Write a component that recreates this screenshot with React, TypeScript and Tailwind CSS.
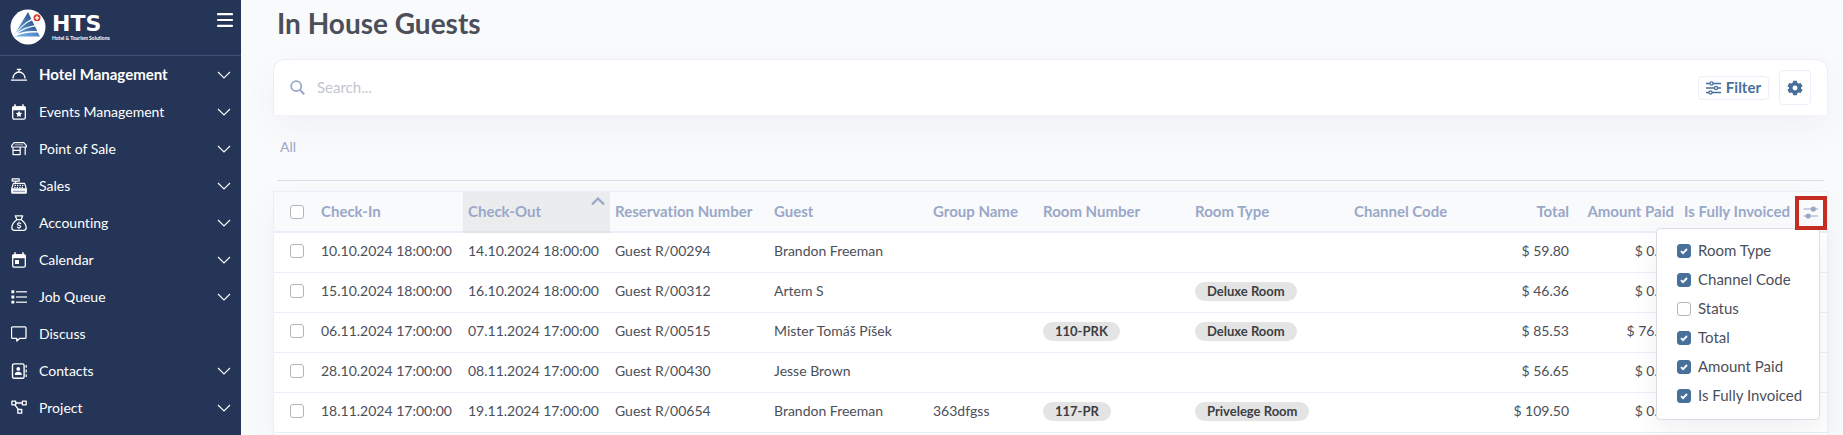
import type { ReactNode } from "react";

const line = {
  fill: "none",
  stroke: "currentColor",
  strokeWidth: 1.3,
  strokeLinecap: "round" as const,
  strokeLinejoin: "round" as const,
};

function Icon({ children }: { children: ReactNode }) {
  return (
    <svg viewBox="0 0 16 16" className="size-4 shrink-0" aria-hidden="true">
      {children}
    </svg>
  );
}

const BellIcon = () => (
  <Icon>
    <path {...line} strokeLinecap="butt" d="M0 13.2h16M2 11.4a6 6.4 0 0 1 12 0M5.8 2.3h4.4M8 2.3V5" />
  </Icon>
);
const EventIcon = () => (
  <Icon>
    <rect {...line} x="1.7" y="2.8" width="12.6" height="12.4" rx="1.6" />
    <path fill="currentColor" d="M1.2 3.6C1.2 2.7 2 2.2 2.8 2.2h10.4c.9 0 1.6.6 1.6 1.4v2.6H1.2ZM3.3.2h1.5v3H3.3ZM11.2.2h1.5v3h-1.5ZM8 6.8l1 2 2.2.3-1.6 1.6.4 2.2L8 11.9l-2 1 .4-2.2-1.6-1.6L7 8.8Z" />
  </Icon>
);
const ShopIcon = () => (
  <Icon>
    <path {...line} strokeWidth={1.2} d="M3.2 1.600h9.600L15.400 4.600V6H.6V4.600ZM2 6v7.600h7.200V6M2 9.300h7.200M14.200 6v7.600" />
    <path {...line} strokeWidth={1} d="M4.200 3.800h7.600" opacity=".6" />
  </Icon>
);
const RegisterIcon = () => (
  <Icon>
    <path {...line} strokeWidth={1.2} d="M1.200.8h7v2.400h-7ZM4.700 3.200v2.200M2.400 5.400h11.200l1.700 5.400H.7Z" />
    <path fill="currentColor" d="M.1 11h15.800v3.600c0 .8-.4 1.200-1.200 1.200H1.300c-.8 0-1.200-.4-1.200-1.200Z" />
    <path stroke="#9aa5c4" strokeWidth="1.400" d="M2 13.400h12" />
    <path stroke="currentColor" strokeWidth="1.200" strokeDasharray="1.300 1.200" d="M3.600 7.400h9M3.200 9.300h10" />
  </Icon>
);
const MoneyBagIcon = () => (
  <Icon>
    <path {...line} d="M5.800 4.600 4.300.8h7.400l-1.500 3.800ZM5.800 4.800C3 6.800.8 9.900.8 12.800c0 1.700 1 2.500 2.600 2.500h9.200c1.600 0 2.600-.8 2.600-2.500 0-2.900-2.200-6-5-8" />
    <path {...line} strokeWidth={1.1} d="M9.700 8.600C9.200 7.900 6.400 7.700 6.400 9.200c0 1.600 3.300.8 3.300 2.400 0 1.500-2.900 1.300-3.400.4M8 7v1M8 12.700v1" />
  </Icon>
);
const CalendarIcon = () => (
  <Icon>
    <rect {...line} x="1.700" y="2.800" width="12.600" height="12.400" rx="1.600" />
    <path fill="currentColor" d="M1.200 3.600c0-.9.800-1.400 1.600-1.400h10.400c.9 0 1.600.6 1.600 1.400v2.600H1.200ZM3.300.2h1.500v3H3.300ZM11.200.2h1.500v3h-1.500ZM4 8h4v4H4Z" />
  </Icon>
);
const ListIcon = () => (
  <Icon>
    <path stroke="currentColor" strokeWidth="1.600" opacity=".8" d="M5 2.800h11M5 8h11M5 13.200h11" />
    <path fill="currentColor" d="M.4 1.300h2.900v2.900H.4ZM.4 6.500h2.900v2.900H.4ZM.4 11.700h2.900v2.900H.4Z" />
  </Icon>
);
const ChatIcon = () => (
  <Icon>
    <path {...line} d="M1.700.8h12.100c.8 0 1.200.4 1.200 1.200v9.200c0 .8-.4 1.200-1.200 1.200H8.600L5.800 15v-2.600H1.700c-.8 0-1.200-.4-1.200-1.200V2c0-.8.4-1.200 1.200-1.200Z" />
  </Icon>
);
const ContactsIcon = () => (
  <Icon>
    <rect {...line} strokeWidth={1.4} x="1.500" y=".9" width="11.600" height="14.400" rx="1.600" />
    <circle cx="7.300" cy="5.900" r="1.900" fill="currentColor" />
    <path fill="currentColor" d="M3.800 11.900c0-2 1.300-3.100 3.500-3.100s3.500 1.100 3.500 3.100ZM14.600 2h1.200v2.800h-1.200ZM14.600 6.600h1.200v2.800h-1.200ZM14.600 11.200h1.200V14h-1.200Z" />
  </Icon>
);
const ProjectIcon = () => (
  <Icon>
    <path {...line} d="M.9 1.200h3.800v3.600H.9ZM11.400 1.200h3.800v3.600h-3.800ZM6.800 9.500h3.900v3.700H6.800ZM4.700 3h6.700M3.900 4.800l3.500 4.700" />
  </Icon>
);

const menu = [
  { label: "Hotel Management", icon: <BellIcon />, active: true },
  { label: "Events Management", icon: <EventIcon /> },
  { label: "Point of Sale", icon: <ShopIcon /> },
  { label: "Sales", icon: <RegisterIcon /> },
  { label: "Accounting", icon: <MoneyBagIcon /> },
  { label: "Calendar", icon: <CalendarIcon /> },
  { label: "Job Queue", icon: <ListIcon /> },
  { label: "Discuss", icon: <ChatIcon />, leaf: true },
  { label: "Contacts", icon: <ContactsIcon /> },
  { label: "Project", icon: <ProjectIcon /> },
];

function Logo() {
  return (
    <a href="#home" className="flex items-center gap-[6px]">
      <svg viewBox="0 0 36 36" className="size-9" aria-hidden="true">
        <defs>
          <linearGradient id="sail" x1="0" y1="1" x2="1" y2="0">
            <stop offset="0" stopColor="#6fb2e6" />
            <stop offset="1" stopColor="#2b4f88" />
          </linearGradient>
          <linearGradient id="base" x1="0" y1="0" x2="1" y2="0">
            <stop offset="0" stopColor="#7dbcec" />
            <stop offset="1" stopColor="#4a83bd" />
          </linearGradient>
        </defs>
        <circle cx="18" cy="18" r="17.500" fill="#fff" />
        <path fill="url(#sail)" d="M4.500 25.500 18 3l3.300 7C14.500 13.500 9 19 4.500 25.500Z" />
        <path fill="url(#sail)" d="M6.500 24C11 18 16 13.600 22 11.400l2.400 4.800C17.500 17.400 11.500 20 6.500 24Z" />
        <path fill="url(#sail)" d="M7 25c6-4.200 11-6.500 18-7.400l2.400 4.600C20 21.500 13 22.400 7 25Z" />
        <path fill="url(#base)" d="M4.500 27.500c7.500-3.400 15-4.500 23.400-4l2.100 4Z" />
        <circle cx="27" cy="8.800" r="3.500" fill="#d63a2c" />
        <path d="M27 6.700v4.200M24.900 8.800h4.200" stroke="#fff" strokeWidth="1.300" />
      </svg>
      <span className="flex flex-col text-white">
        <span className="font-['DejaVu_Sans'] text-[22px] leading-[22px] font-bold">HTS</span>
        <span className="text-[5px] leading-[6px] font-bold whitespace-nowrap">Hotel &amp; Tourism Solutions</span>
      </span>
    </a>
  );
}

function Sidebar() {
  return (
    <aside className="w-[241px] shrink-0 bg-[#253557] text-white">
      <div className="flex h-14 items-start justify-between border-b border-[#405079] pt-[9px] pr-2 pl-[10px]">
        <Logo />
        <button type="button" aria-label="Toggle menu" className="mt-1">
          <svg viewBox="0 0 16 14" className="h-[14px] w-4">
            <path d="M1 1.200h14M1 7h14M1 12.800h14" stroke="currentColor" strokeWidth="2.200" strokeLinecap="round" />
          </svg>
        </button>
      </div>
      <nav>
        {menu.map((m) => (
          <a key={m.label} href="#menu" className="flex h-[37px] items-center pr-[10px] pl-[11px]">
            {m.icon}
            <span className={m.active ? "ml-3 grow text-[15px] font-bold" : "ml-3 grow"}>{m.label}</span>
            {!m.leaf && (
              <svg viewBox="0 0 14 8" className="h-2 w-[14px]" aria-hidden="true">
                <path d="M1 1l6 6 6-6" fill="none" stroke="currentColor" strokeWidth="1.100" />
              </svg>
            )}
          </a>
        ))}
      </nav>
    </aside>
  );
}

function Check({ label, checked }: { label: string; checked?: boolean }) {
  return (
    <span className="grid size-[14px] shrink-0 place-items-center">
      <input
        type="checkbox"
        aria-label={label}
        defaultChecked={checked}
        className="peer col-start-1 row-start-1 size-[14px] appearance-none rounded-[3px] border border-[#b4b5b8] bg-white checked:border-[#47709b] checked:bg-[#47709b]"
      />
      <svg viewBox="0 0 14 14" className="pointer-events-none col-start-1 row-start-1 hidden size-[14px] peer-checked:block" aria-hidden="true">
        <path d="M4 7.200l2 2 4-4.200" fill="none" stroke="#fff" strokeWidth="1.900" />
      </svg>
    </span>
  );
}

const columns = [
  { name: "Check-In", width: "w-[147px]" },
  { name: "Check-Out", width: "w-[147px]", sorted: true },
  { name: "Reservation Number", width: "w-[159px]" },
  { name: "Guest", width: "w-[159px]" },
  { name: "Group Name", width: "w-[110px]" },
  { name: "Room Number", width: "w-[152px]" },
  { name: "Room Type", width: "w-[159px]" },
  { name: "Channel Code", width: "w-[159px]" },
  { name: "Total", width: "w-[66px]", right: true },
  { name: "Amount Paid", width: "w-[105px]", right: true },
  { name: "Is Fully Invoiced", width: "w-[116px]" },
];

const rows = [
  { in: "10.10.2024 18:00:00", out: "14.10.2024 18:00:00", ref: "Guest R/00294", guest: "Brandon Freeman", total: "$ 59.80", paid: "$ 0.00" },
  { in: "15.10.2024 18:00:00", out: "16.10.2024 18:00:00", ref: "Guest R/00312", guest: "Artem S", type: "Deluxe Room", total: "$ 46.36", paid: "$ 0.00" },
  { in: "06.11.2024 17:00:00", out: "07.11.2024 17:00:00", ref: "Guest R/00515", guest: "Mister Tomáš Píšek", room: "110-PRK", type: "Deluxe Room", total: "$ 85.53", paid: "$ 76.00" },
  { in: "28.10.2024 17:00:00", out: "08.11.2024 17:00:00", ref: "Guest R/00430", guest: "Jesse Brown", total: "$ 56.65", paid: "$ 0.00" },
  { in: "18.11.2024 17:00:00", out: "19.11.2024 17:00:00", ref: "Guest R/00654", guest: "Brandon Freeman", group: "363dfgss", room: "117-PR", type: "Privelege Room", total: "$ 109.50", paid: "$ 0.00" },
];

const options = [
  { name: "Room Type", on: true },
  { name: "Channel Code", on: true },
  { name: "Status", on: false },
  { name: "Total", on: true },
  { name: "Amount Paid", on: true },
  { name: "Is Fully Invoiced", on: true },
];

function Badge({ text }: { text?: string }) {
  if (!text) return null;
  return (
    <span className="inline-block h-[19px] rounded-full bg-[#e4e4e5] px-3 align-middle text-[13px] leading-[19px] font-bold text-[#3d3e42]">
      {text}
    </span>
  );
}

function ColumnMenu() {
  return (
    <div className="absolute top-9 right-[7px] z-10 flex w-[164px] flex-col rounded border border-[#dcdee3] bg-white pt-[7px] pb-[9px] pl-5 text-left text-[15px] font-normal text-[#4b4f5a] shadow-[0_10px_24px_rgba(60,72,100,0.08)]">
      {options.map((o) => (
        <label key={o.name} className="flex h-[29px] items-center gap-[7px] whitespace-nowrap">
          <Check label={o.name} checked={o.on} />
          {o.name}
        </label>
      ))}
    </div>
  );
}

function GuestTable() {
  return (
    <table className="w-full table-fixed border-separate border-spacing-0 text-[#4b4f5a]">
      <thead>
        <tr className="h-[41px] bg-[#f9fafc] text-left text-[15px] whitespace-nowrap text-[#9aa8c8]">
          <th className="w-[42px] border-b-2 border-[#ebeef8] p-0 pl-4">
            <Check label="Select all guests" />
          </th>
          {columns.map((c) => (
            <th
              key={c.name}
              className={`${c.width} relative border-b-2 px-[5px] py-0 font-bold ${c.right ? "text-right" : ""} ${c.sorted ? "border-[#e2e3e8] bg-[#ebecee]" : "border-[#ebeef8]"}`}
            >
              {c.name}
              {c.sorted && (
                <svg viewBox="0 0 14 8" className="absolute top-[5px] right-[5px] h-2 w-[14px]" aria-hidden="true">
                  <path d="M1 7.500L7 1.500l6 6" fill="none" stroke="currentColor" strokeWidth="2.200" />
                </svg>
              )}
            </th>
          ))}
          <th className="relative w-8 border-b-2 border-[#ebeef8] p-0">
            <button type="button" aria-label="Choose columns" className="absolute top-1 right-0 z-20 grid h-[34px] w-8 place-items-center border-4 border-[#c52c22]">
              <svg viewBox="0 0 16 14" className="h-[14px] w-4" aria-hidden="true">
                <path d="M.5 3h14.500M.5 10h14.500" stroke="currentColor" strokeWidth="1.200" />
                <circle cx="10.300" cy="3" r="2.600" fill="currentColor" />
                <circle cx="5.200" cy="10" r="2.600" fill="currentColor" />
              </svg>
            </button>
            <ColumnMenu />
          </th>
        </tr>
      </thead>
      <tbody>
        {rows.map((r) => (
          <tr key={r.ref} className="h-10 whitespace-nowrap *:border-b *:border-[#ebeef8] *:px-[5px] *:pt-0 *:pb-[3px]">
            <td>
              <div className="pl-[11px]">
                <Check label={`Select ${r.ref}`} />
              </div>
            </td>
            <td>{r.in}</td>
            <td>{r.out}</td>
            <td>{r.ref}</td>
            <td>{r.guest}</td>
            <td>{r.group}</td>
            <td><Badge text={r.room} /></td>
            <td><Badge text={r.type} /></td>
            <td />
            <td className="text-right">{r.total}</td>
            <td className="text-right">{r.paid}</td>
            <td />
            <td />
          </tr>
        ))}
      </tbody>
    </table>
  );
}

export default function App() {
  return (
    <div className="flex min-h-screen bg-[#f9fafc] font-[Lato,sans-serif] text-sm [font-variant-ligatures:none]">
      <Sidebar />
      <main className="flex min-w-0 grow flex-col pr-[15px] pl-8">
        <h1 className="mt-[7px] ml-1 text-[28px] leading-8 font-bold text-[#4b4f5a]">In House Guests</h1>
        <section className="mt-5 flex h-14 items-center rounded-t-xl border border-b-0 border-[#ebeef8] bg-white pr-4 pl-4 shadow-[0_12px_32px_rgba(60,72,100,0.05)]">
          <svg viewBox="0 0 15 15" className="size-[15px] text-[#9aa8c8]" aria-hidden="true">
            <circle cx="6.200" cy="6.200" r="5" fill="none" stroke="currentColor" strokeWidth="1.800" />
            <path d="M9.800 9.800l4.400 4.400" stroke="currentColor" strokeWidth="2" />
          </svg>
          <input
            type="search"
            aria-label="Search"
            placeholder="Search..."
            className="ml-3 min-w-0 grow bg-transparent text-[15px] outline-none placeholder:text-[#c3c6cd]"
          />
          <button type="button" className="flex h-6 items-center gap-[5px] rounded border border-[#ebeef8] px-[7px] text-[15px] font-bold text-[#47709b]">
            <svg viewBox="0 0 15 14" className="h-[14px] w-[15px]" aria-hidden="true">
              <path d="M0 2.500h15M0 7h15M0 11.500h15" stroke="currentColor" strokeWidth="1.500" />
              <g fill="#fff" stroke="currentColor" strokeWidth="1.300">
                <circle cx="5.500" cy="2.500" r="1.600" />
                <circle cx="10" cy="7" r="1.600" />
                <circle cx="4.500" cy="11.500" r="1.600" />
              </g>
            </svg>
            Filter
          </button>
          <button type="button" aria-label="Settings" className="ml-[10px] grid h-[35px] w-8 place-items-center rounded border border-[#ebeef8] text-[#47709b]">
            <svg viewBox="0 0 24 24" className="size-4" aria-hidden="true">
              <path
                fill="currentColor"
                fillRule="evenodd"
                d="M9.200 1h5.600l.7 3.200 2 1.200 3.100-1 2.800 4.800-2.400 2.200v1.200l2.400 2.200-2.800 4.800-3.100-1-2 1.200-.7 3.200H9.200l-.7-3.200-2-1.200-3.100 1-2.800-4.800L3 12.600v-1.200L.6 9.200l2.800-4.800 3.100 1 2-1.200ZM12 8.300a3.700 3.700 0 1 0 0 7.400 3.700 3.700 0 0 0 0-7.400Z"
              />
            </svg>
          </button>
        </section>
        <div className="mx-1 mb-[10px] flex h-[66px] items-center border-b border-[#dcdde1] px-[3px] pb-0.5 text-[#9aa8c8]">
          <a href="#all">All</a>
        </div>
        <section className="grow border border-b-0 border-[#ebeef5] bg-white shadow-[0_12px_32px_rgba(60,72,100,0.05)]">
          <GuestTable />
        </section>
      </main>
    </div>
  );
}
